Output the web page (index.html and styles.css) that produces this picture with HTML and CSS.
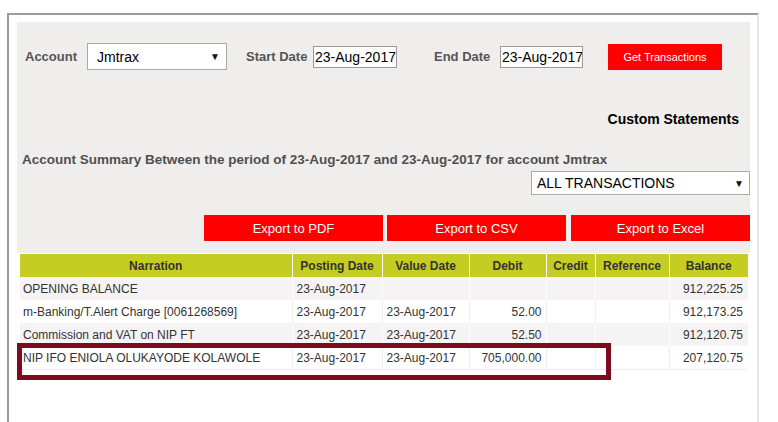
FILE: index.html
```html
<!DOCTYPE html>
<html>
<head>
<meta charset="utf-8">
<link rel="stylesheet" href="styles.css">
</head>
<body>
<div class="frame">
  <div class="panel">
    <div class="controls">
      <span class="lbl lbl-account">Account</span>
      <div class="select sel-account"><span>Jmtrax</span><span class="arrow">&#9660;</span></div>
      <span class="lbl lbl-start">Start Date</span>
      <div class="input inp-start">23-Aug-2017</div>
      <span class="lbl lbl-end">End Date</span>
      <div class="input inp-end">23-Aug-2017</div>
      <div class="btn btn-get">Get Transactions</div>
    </div>
    <div class="custom">Custom Statements</div>
    <div class="summary">Account Summary Between the period of 23-Aug-2017 and 23-Aug-2017 for account Jmtrax</div>
    <div class="filter-row">
      <div class="select sel-type"><span>ALL TRANSACTIONS</span><span class="arrow">&#9660;</span></div>
    </div>
    <div class="export-row">
      <div class="btn btn-export">Export to PDF</div>
      <div class="btn btn-export gap4">Export to CSV</div>
      <div class="btn btn-export gap5">Export to Excel</div>
    </div>
  </div>
  <table class="tx">
    <colgroup>
      <col class="c-narr"><col class="c-post"><col class="c-val"><col class="c-deb"><col class="c-cred"><col class="c-ref"><col class="c-bal">
    </colgroup>
    <thead>
      <tr><th>Narration</th><th>Posting Date</th><th>Value Date</th><th>Debit</th><th>Credit</th><th>Reference</th><th>Balance</th></tr>
    </thead>
    <tbody>
      <tr class="alt"><td>OPENING BALANCE</td><td>23-Aug-2017</td><td></td><td class="num"></td><td></td><td></td><td class="num">912,225.25</td></tr>
      <tr><td>m-Banking/T.Alert Charge [0061268569]</td><td>23-Aug-2017</td><td>23-Aug-2017</td><td class="num">52.00</td><td></td><td></td><td class="num">912,173.25</td></tr>
      <tr class="alt"><td>Commission and VAT on NIP FT</td><td>23-Aug-2017</td><td>23-Aug-2017</td><td class="num">52.50</td><td></td><td></td><td class="num">912,120.75</td></tr>
      <tr><td>NIP IFO ENIOLA OLUKAYODE KOLAWOLE</td><td>23-Aug-2017</td><td>23-Aug-2017</td><td class="num">705,000.00</td><td></td><td></td><td class="num">207,120.75</td></tr>
    </tbody>
  </table>
</div>
<div class="highlight"></div>
</body>
</html>
```

FILE: styles.css
```css
html, body {
  margin: 0;
  padding: 0;
  background: #fff;
  font-family: "Liberation Sans", Arial, sans-serif;
}

.frame {
  margin: 13px 0 0 7px;
  width: 752px;
  height: 409px;
  box-sizing: border-box;
  border-top: 2px solid #9b9b9b;
  border-left: 2px solid #9b9b9b;
  border-right: 2px solid #e6e6e6;
  padding: 7px 7px 0 8px;
}

.panel {
  background: #f0eded;
  padding: 21px 0 12px 0;
}

.controls {
  display: flex;
  align-items: center;
  height: 27px;
  padding-left: 8px;
}

.lbl {
  font-size: 13px;
  font-weight: bold;
  color: #555;
  white-space: nowrap;
}
.lbl-account { width: 62px; }
.lbl-start { width: 67px; margin-left: 19px; }
.lbl-end { width: 66px; margin-left: 37px; }

.select {
  display: flex;
  align-items: center;
  justify-content: space-between;
  box-sizing: border-box;
  background: #fff;
  border: 1px solid #a9a9a9;
  font-size: 14px;
  color: #000;
  white-space: nowrap;
}
.select .arrow {
  font-size: 10px;
  color: #111;
}
.sel-account {
  width: 140px;
  height: 27px;
  padding: 0 6px 0 9px;
}
.sel-type {
  width: 219px;
  height: 24px;
  padding: 0 5px 0 5px;
}

.input {
  box-sizing: border-box;
  height: 22px;
  line-height: 20px;
  background: #fff;
  border: 1px solid #9a9a9a;
  font-size: 14px;
  color: #000;
  padding-left: 1px;
  white-space: nowrap;
  overflow: hidden;
}
.inp-start { width: 84px; }
.inp-end { width: 83px; }

.btn {
  background: #ff0000;
  color: #fff;
  display: flex;
  align-items: center;
  justify-content: center;
  box-sizing: border-box;
  white-space: nowrap;
}
.btn-get {
  width: 114px;
  height: 26px;
  margin-left: 25px;
  font-size: 11px;
}

.custom {
  margin-top: 40px;
  line-height: 18px;
  text-align: right;
  padding-right: 11px;
  font-size: 14px;
  font-weight: bold;
  color: #000;
}

.summary {
  margin-top: 23px;
  line-height: 18px;
  padding-left: 5px;
  font-size: 13.5px;
  font-weight: bold;
  color: #505050;
}

.filter-row {
  display: flex;
  justify-content: flex-end;
  margin-top: 2px;
}

.export-row {
  display: flex;
  justify-content: flex-end;
  margin-top: 20px;
}
.btn-export {
  width: 179px;
  height: 26px;
  font-size: 13px;
}
.gap4 { margin-left: 4px; }
.gap5 { margin-left: 5px; }

.tx {
  margin: 1px 0 0 3px;
  width: 728px;
  border-collapse: collapse;
  table-layout: fixed;
  font-size: 12px;
  color: #333;
}
.c-narr { width: 272px; }
.c-post { width: 90px; }
.c-val { width: 87px; }
.c-deb { width: 77px; }
.c-cred { width: 49px; }
.c-ref { width: 74px; }
.c-bal { width: 79px; }

.tx th {
  background: #c6cd22;
  height: 23px;
  padding: 0;
  font-weight: bold;
  text-align: center;
  border-right: 1px solid #fff;
}
.tx th:last-child { border-right: none; }

.tx td {
  height: 23px;
  padding: 0 4px 0 3px;
  white-space: nowrap;
  border-right: 1px solid #eeeeee;
  background: #fff;
}
.tx td:nth-child(2), .tx td:nth-child(3) { padding-left: 4px; }
.tx tr.alt td {
  background: #f5f3f3;
  border-right-color: #ffffff;
}
.tx td:last-child { border-right: none; padding-right: 5px; }
.tx tbody tr:last-child td { border-bottom: 1px solid #eeeeee; }
.tx td.num { text-align: right; }

.highlight {
  position: absolute;
  left: 17px;
  top: 343px;
  width: 594px;
  height: 37px;
  box-sizing: border-box;
  border: 5px solid #7d0a1f;
}
```
